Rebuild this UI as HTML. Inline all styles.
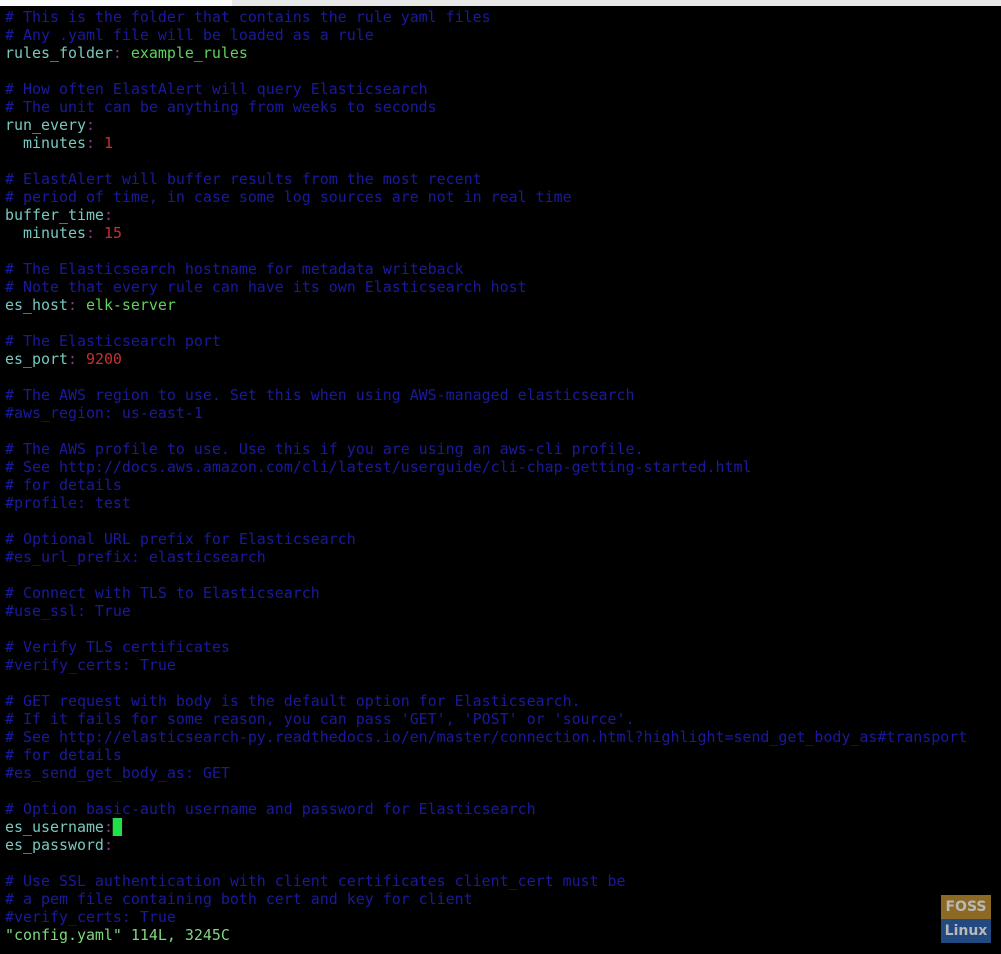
<!DOCTYPE html>
<html><head><meta charset="utf-8"><style>
html,body{margin:0;padding:0;width:1001px;height:954px;overflow:hidden;background:#000}
#top{position:absolute;left:0;top:0;width:1001px;height:6px;background:#e8e8e8}
#top2{position:absolute;left:0;top:0;width:232px;height:6px;background:#fafafa}
pre{position:absolute;left:5px;top:8px;margin:0;font-family:"DejaVu Sans Mono","Liberation Mono",monospace;font-size:14.95px;line-height:18px;color:#6fc4c4;white-space:pre}
.c{color:#1a1a9e}.k{color:#78c8c0}.p{color:#8a3a8a}.v{color:#5fd35f}.n{color:#c83030}.s{color:#7fd77f}
.cur{background:#22e04a;color:#22e04a}
#logo{position:absolute;left:941px;top:895px;width:50px;height:48px;font-family:"DejaVu Sans","Liberation Sans",sans-serif;font-weight:bold;font-size:14px;text-align:center;color:#b8b8b8}
#logo div{height:24px;line-height:24px}
</style></head><body>
<div id="top"></div><div id="top2"></div>
<pre><span class="c"># This is the folder that contains the rule yaml files
# Any .yaml file will be loaded as a rule</span>
<span class="k">rules_folder</span><span class="p">:</span> <span class="v">example_rules</span>

<span class="c"># How often ElastAlert will query Elasticsearch
# The unit can be anything from weeks to seconds</span>
<span class="k">run_every</span><span class="p">:</span>
  <span class="k">minutes</span><span class="p">:</span> <span class="n">1</span>

<span class="c"># ElastAlert will buffer results from the most recent
# period of time, in case some log sources are not in real time</span>
<span class="k">buffer_time</span><span class="p">:</span>
  <span class="k">minutes</span><span class="p">:</span> <span class="n">15</span>

<span class="c"># The Elasticsearch hostname for metadata writeback
# Note that every rule can have its own Elasticsearch host</span>
<span class="k">es_host</span><span class="p">:</span> <span class="v">elk-server</span>

<span class="c"># The Elasticsearch port</span>
<span class="k">es_port</span><span class="p">:</span> <span class="n">9200</span>

<span class="c"># The AWS region to use. Set this when using AWS-managed elasticsearch
#aws_region: us-east-1

# The AWS profile to use. Use this if you are using an aws-cli profile.
# See http://docs.aws.amazon.com/cli/latest/userguide/cli-chap-getting-started.html
# for details
#profile: test

# Optional URL prefix for Elasticsearch
#es_url_prefix: elasticsearch

# Connect with TLS to Elasticsearch
#use_ssl: True

# Verify TLS certificates
#verify_certs: True

# GET request with body is the default option for Elasticsearch.
# If it fails for some reason, you can pass 'GET', 'POST' or 'source'.
# See http://elasticsearch-py.readthedocs.io/en/master/connection.html?highlight=send_get_body_as#transport
# for details
#es_send_get_body_as: GET

# Option basic-auth username and password for Elasticsearch</span>
<span class="k">es_username</span><span class="p">:</span><span class="cur">█</span>
<span class="k">es_password</span><span class="p">:</span>

<span class="c"># Use SSL authentication with client certificates client_cert must be
# a pem file containing both cert and key for client
#verify_certs: True</span>
<span class="s">"config.yaml" 114L, 3245C</span></pre>
<div id="logo"><div style="background:#8c6a24">FOSS</div><div style="background:#234a80">Linux</div></div>
</body></html>
